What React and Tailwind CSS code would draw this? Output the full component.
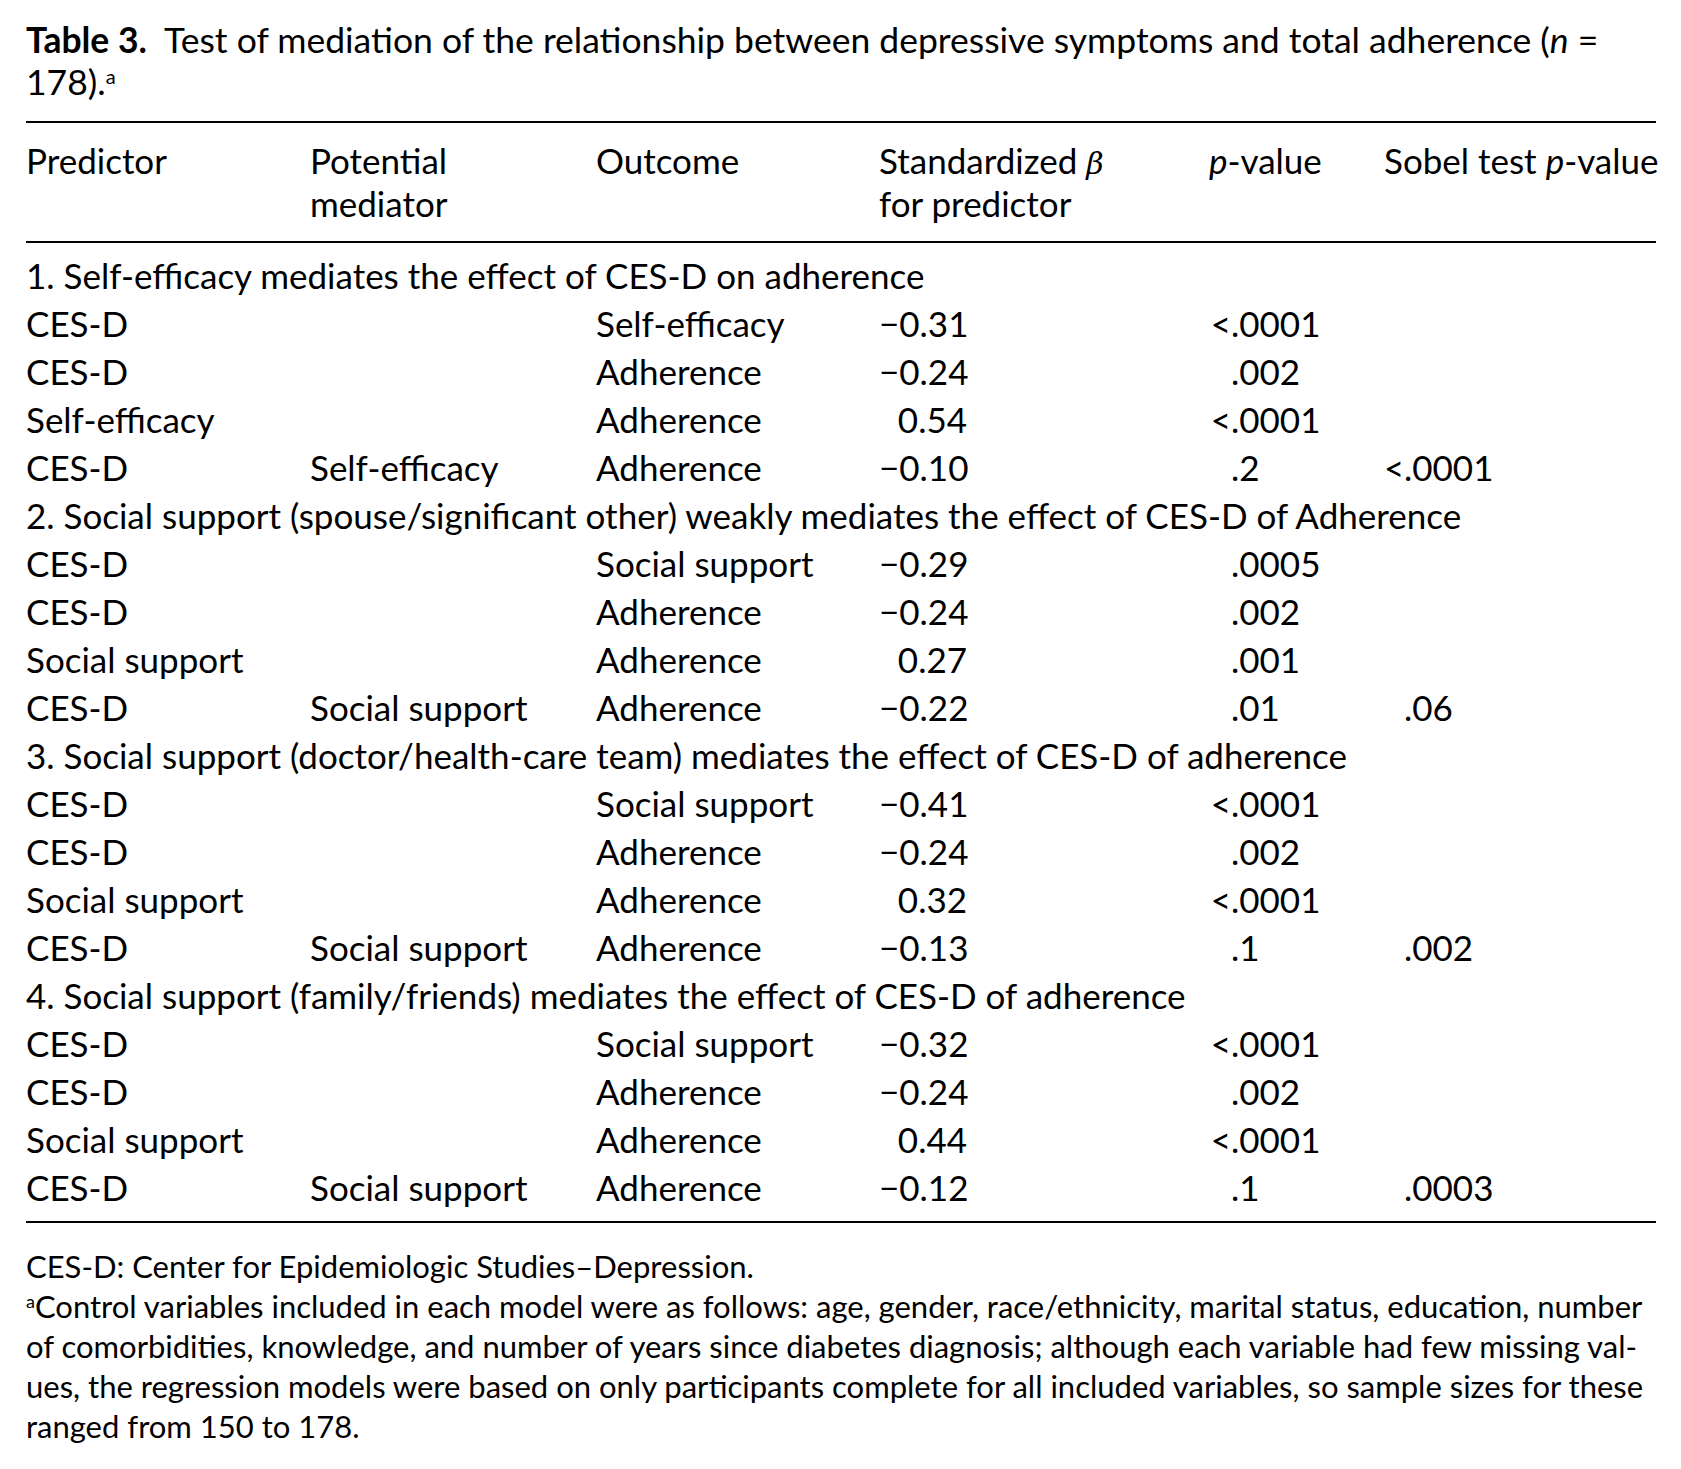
import React from 'react';

const sections = [
  {
    title: '1. Self-efficacy mediates the effect of CES-D on adherence',
    rows: [
      ['CES-D', '', 'Self-efficacy', '−0.31', ['<', '.0001'], null],
      ['CES-D', '', 'Adherence', '−0.24', ['', '.002'], null],
      ['Self-efficacy', '', 'Adherence', '0.54', ['<', '.0001'], null],
      ['CES-D', 'Self-efficacy', 'Adherence', '−0.10', ['', '.2'], ['<', '.0001']],
    ],
  },
  {
    title: '2. Social support (spouse/significant other) weakly mediates the effect of CES-D of Adherence',
    rows: [
      ['CES-D', '', 'Social support', '−0.29', ['', '.0005'], null],
      ['CES-D', '', 'Adherence', '−0.24', ['', '.002'], null],
      ['Social support', '', 'Adherence', '0.27', ['', '.001'], null],
      ['CES-D', 'Social support', 'Adherence', '−0.22', ['', '.01'], ['', '.06']],
    ],
  },
  {
    title: '3. Social support (doctor/health-care team) mediates the effect of CES-D of adherence',
    rows: [
      ['CES-D', '', 'Social support', '−0.41', ['<', '.0001'], null],
      ['CES-D', '', 'Adherence', '−0.24', ['', '.002'], null],
      ['Social support', '', 'Adherence', '0.32', ['<', '.0001'], null],
      ['CES-D', 'Social support', 'Adherence', '−0.13', ['', '.1'], ['', '.002']],
    ],
  },
  {
    title: '4. Social support (family/friends) mediates the effect of CES-D of adherence',
    rows: [
      ['CES-D', '', 'Social support', '−0.32', ['<', '.0001'], null],
      ['CES-D', '', 'Adherence', '−0.24', ['', '.002'], null],
      ['Social support', '', 'Adherence', '0.44', ['<', '.0001'], null],
      ['CES-D', 'Social support', 'Adherence', '−0.12', ['', '.1'], ['', '.0003']],
    ],
  },
];

// decimal-aligned number: prefix box is right aligned so the dots line up
function Aligned({ value, prefixWidth }) {
  if (!value) return <div />;
  return (
    <div className="flex whitespace-nowrap">
      <span className={`${prefixWidth} text-right`}>{value[0]}</span>
      <span>{value[1]}</span>
    </div>
  );
}

export default function App() {
  return (
    <div className="bg-white text-black w-[1681px] min-h-[1469px] pl-[26px] pr-[25px] pt-[19px] font-['Lato','Noto_Sans',sans-serif]">
      <p className="text-[35.5px] leading-[42px] whitespace-nowrap">
        <b>Table 3.</b>&nbsp; Test of mediation of the relationship between depressive symptoms and total adherence (<i>n</i> =
        <br />
        178).<sup className="text-[20px] leading-none relative -top-[11px] align-baseline">a</sup>
      </p>

      <div className="mt-[18px] border-t-2 border-black" />

      <div className="grid grid-cols-[284px_286px_283px_330px_175px_1fr] text-[35px] leading-[43px] pt-[16px] pb-[16px]">
        <div>Predictor</div>
        <div>Potential<br />mediator</div>
        <div>Outcome</div>
        <div className="whitespace-nowrap">
          Standardized <i className="font-['DejaVu_Serif',serif] text-[30px] leading-none">β</i>
          <br />
          for predictor
        </div>
        <div><i>p</i>-value</div>
        <div className="whitespace-nowrap">Sobel test <i>p</i>-value</div>
      </div>

      <div className="border-t-2 border-black" />

      <div className="grid grid-cols-[284px_286px_283px_330px_175px_1fr] text-[35px] leading-[48px] pt-[8px]">
        {sections.map((s) => (
          <React.Fragment key={s.title}>
            <div className="col-span-6 whitespace-nowrap">{s.title}</div>
            {s.rows.map((r, i) => (
              <React.Fragment key={i}>
                <div className="whitespace-nowrap">{r[0]}</div>
                <div className="whitespace-nowrap">{r[1]}</div>
                <div className="whitespace-nowrap">{r[2]}</div>
                <div className="text-right pr-[242px] whitespace-nowrap">{r[3]}</div>
                <Aligned value={r[4]} prefixWidth="w-[22px]" />
                <Aligned value={r[5]} prefixWidth="w-[20px]" />
              </React.Fragment>
            ))}
          </React.Fragment>
        ))}
      </div>

      <div className="mt-[10px] border-t-2 border-black" />

      <div className="pt-[23px] text-[31px] leading-[40px] whitespace-nowrap">
        <p>CES-D: Center for Epidemiologic Studies–Depression.</p>
        <p>
          <sup className="text-[18px] leading-none relative -top-[10px] align-baseline">a</sup>Control variables included in each model were as follows: age, gender, race/ethnicity, marital status, education, number
          <br />
          of comorbidities, knowledge, and number of years since diabetes diagnosis; although each variable had few missing val-
          <br />
          ues, the regression models were based on only participants complete for all included variables, so sample sizes for these
          <br />
          ranged from 150 to 178.
        </p>
      </div>
    </div>
  );
}
